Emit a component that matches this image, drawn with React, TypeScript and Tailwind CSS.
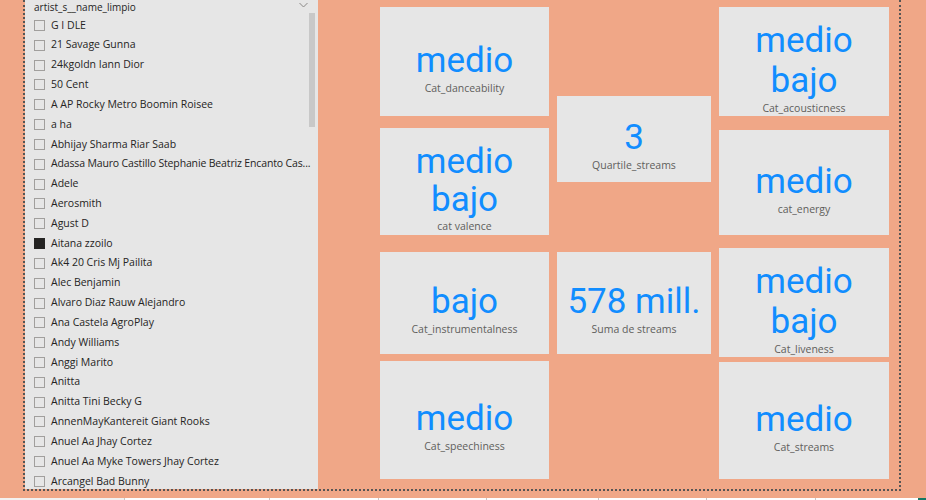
import React from "react";

const artists: { name: string; checked?: boolean; tight?: boolean }[] = [
  { name: "G I DLE" },
  { name: "21 Savage Gunna" },
  { name: "24kgoldn Iann Dior" },
  { name: "50 Cent" },
  { name: "A AP Rocky Metro Boomin Roisee" },
  { name: "a ha" },
  { name: "Abhijay Sharma Riar Saab" },
  { name: "Adassa Mauro Castillo Stephanie Beatriz Encanto Cas...", tight: true },
  { name: "Adele" },
  { name: "Aerosmith" },
  { name: "Agust D" },
  { name: "Aitana zzoilo", checked: true },
  { name: "Ak4 20 Cris Mj Pailita" },
  { name: "Alec Benjamin" },
  { name: "Alvaro Diaz Rauw Alejandro" },
  { name: "Ana Castela AgroPlay" },
  { name: "Andy Williams" },
  { name: "Anggi Marito" },
  { name: "Anitta" },
  { name: "Anitta Tini Becky G" },
  { name: "AnnenMayKantereit Giant Rooks" },
  { name: "Anuel Aa Jhay Cortez" },
  { name: "Anuel Aa Myke Towers Jhay Cortez" },
  { name: "Arcangel Bad Bunny" },
];

function Card({
  h,
  lines,
  label,
  leading = "leading-[40px]",
}: {
  h: string;
  lines: string[];
  label: string;
  leading?: string;
}) {
  return (
    <div className={`${h} w-full bg-[#e6e6e6] flex flex-col items-center justify-center pt-[12px] overflow-hidden`}>
      {lines.map((l) => (
        <div
          key={l}
          className={`text-[35px] ${leading} text-[#118dff] whitespace-nowrap`}
          style={{ fontFamily: "Roboto, 'Liberation Sans', sans-serif" }}
        >
          {l}
        </div>
      ))}
      <div
        className="text-[10.5px] leading-[14px] text-[#605e5c] whitespace-nowrap"
        style={{ fontFamily: "'Open Sans', 'Noto Sans', sans-serif" }}
      >
        {label}
      </div>
    </div>
  );
}

export default function App() {
  return (
    <div className="w-[926px] h-[500px] bg-[#f0a787] overflow-hidden flex flex-col">
      <div className="h-[498px] w-full">
        <div className="ml-[23px] w-[878px] h-[491px] border-l-2 border-r-2 border-b-2 border-dotted border-[#555555] flex">
          {/* Slicer */}
          <div
            className="relative w-[293px] h-[489px] bg-[#e6e6e6] flex flex-col overflow-hidden"
            style={{ fontFamily: "'Open Sans', 'Noto Sans', sans-serif" }}
          >
            <div className="h-[15.5px] shrink-0 pl-[9px] pr-[9px] flex items-center justify-between">
              <span className="text-[10px] leading-[12px] text-[#252423] -mt-[2px]">artist_s__name_limpio</span>
              <svg width="9" height="6" viewBox="0 0 9 6" className="mr-[1px] -mt-[5px]">
                <polyline points="0.5,1 4.5,5 8.5,1" fill="none" stroke="#8a8886" strokeWidth="1" />
              </svg>
            </div>
            <div className="flex flex-col">
              {artists.map((a) => (
                <div key={a.name} className="h-[19.83px] shrink-0 flex items-center pl-[9px]">
                  <div
                    className={`w-[11px] h-[11px] shrink-0 border ${
                      a.checked ? "bg-[#252423] border-[#252423]" : "border-[#a19f9d]"
                    }`}
                  />
                  <span
                    className={`ml-[6px] text-[10.5px] text-[#252423] whitespace-nowrap ${
                      a.tight ? "tracking-[-0.15px]" : ""
                    }`}
                  >
                    {a.name}
                  </span>
                </div>
              ))}
            </div>
            <div className="absolute left-[284px] top-[13px] w-[6px] h-[114px] bg-[#c8c8c8]" />
          </div>

          {/* Column 1 */}
          <div className="ml-[62px] w-[169px] flex flex-col pt-[7px]">
            <Card h="h-[109px]" lines={["medio"]} label="Cat_danceability" />
            <div className="mt-[12px]">
              <Card h="h-[107px]" lines={["medio", "bajo"]} label="cat valence" leading="leading-[38px]" />
            </div>
            <div className="mt-[17px]">
              <Card h="h-[102px]" lines={["bajo"]} label="Cat_instrumentalness" />
            </div>
            <div className="mt-[7px]">
              <Card h="h-[118px]" lines={["medio"]} label="Cat_speechiness" />
            </div>
          </div>

          {/* Column 2 */}
          <div className="ml-[8px] w-[154px] flex flex-col pt-[96px]">
            <Card h="h-[86px]" lines={["3"]} label="Quartile_streams" />
            <div className="mt-[70px]">
              <Card h="h-[102px]" lines={["578 mill."]} label="Suma de streams" />
            </div>
          </div>

          {/* Column 3 */}
          <div className="ml-[8px] w-[170px] flex flex-col pt-[7px]">
            <Card h="h-[109px]" lines={["medio", "bajo"]} label="Cat_acousticness" />
            <div className="mt-[14px]">
              <Card h="h-[105px]" lines={["medio"]} label="cat_energy" />
            </div>
            <div className="mt-[13px]">
              <Card h="h-[109px]" lines={["medio", "bajo"]} label="Cat_liveness" />
            </div>
            <div className="mt-[5px]">
              <Card h="h-[117px]" lines={["medio"]} label="Cat_streams" />
            </div>
          </div>
        </div>
      </div>
      {/* bottom strip */}
      <div className="h-[2px] w-full flex bg-white">
        <div className="w-[124px] h-full bg-[#f3f2f1]" />
        <div className="w-[145px] h-full border-l border-[#c8c6c4]" />
        <div className="w-[109px] h-full border-l border-[#c8c6c4]" />
        <div className="w-[108px] h-full border-l border-[#c8c6c4]" />
        <div className="w-[112px] h-full border-l border-[#c8c6c4]" />
        <div className="w-[108px] h-full border-l border-[#c8c6c4]" />
        <div className="w-[109px] h-full border-l border-[#c8c6c4]" />
        <div className="w-[103px] h-full border-l border-[#c8c6c4]" />
        <div className="w-[8px] h-full bg-[#117865]" />
      </div>
    </div>
  );
}
